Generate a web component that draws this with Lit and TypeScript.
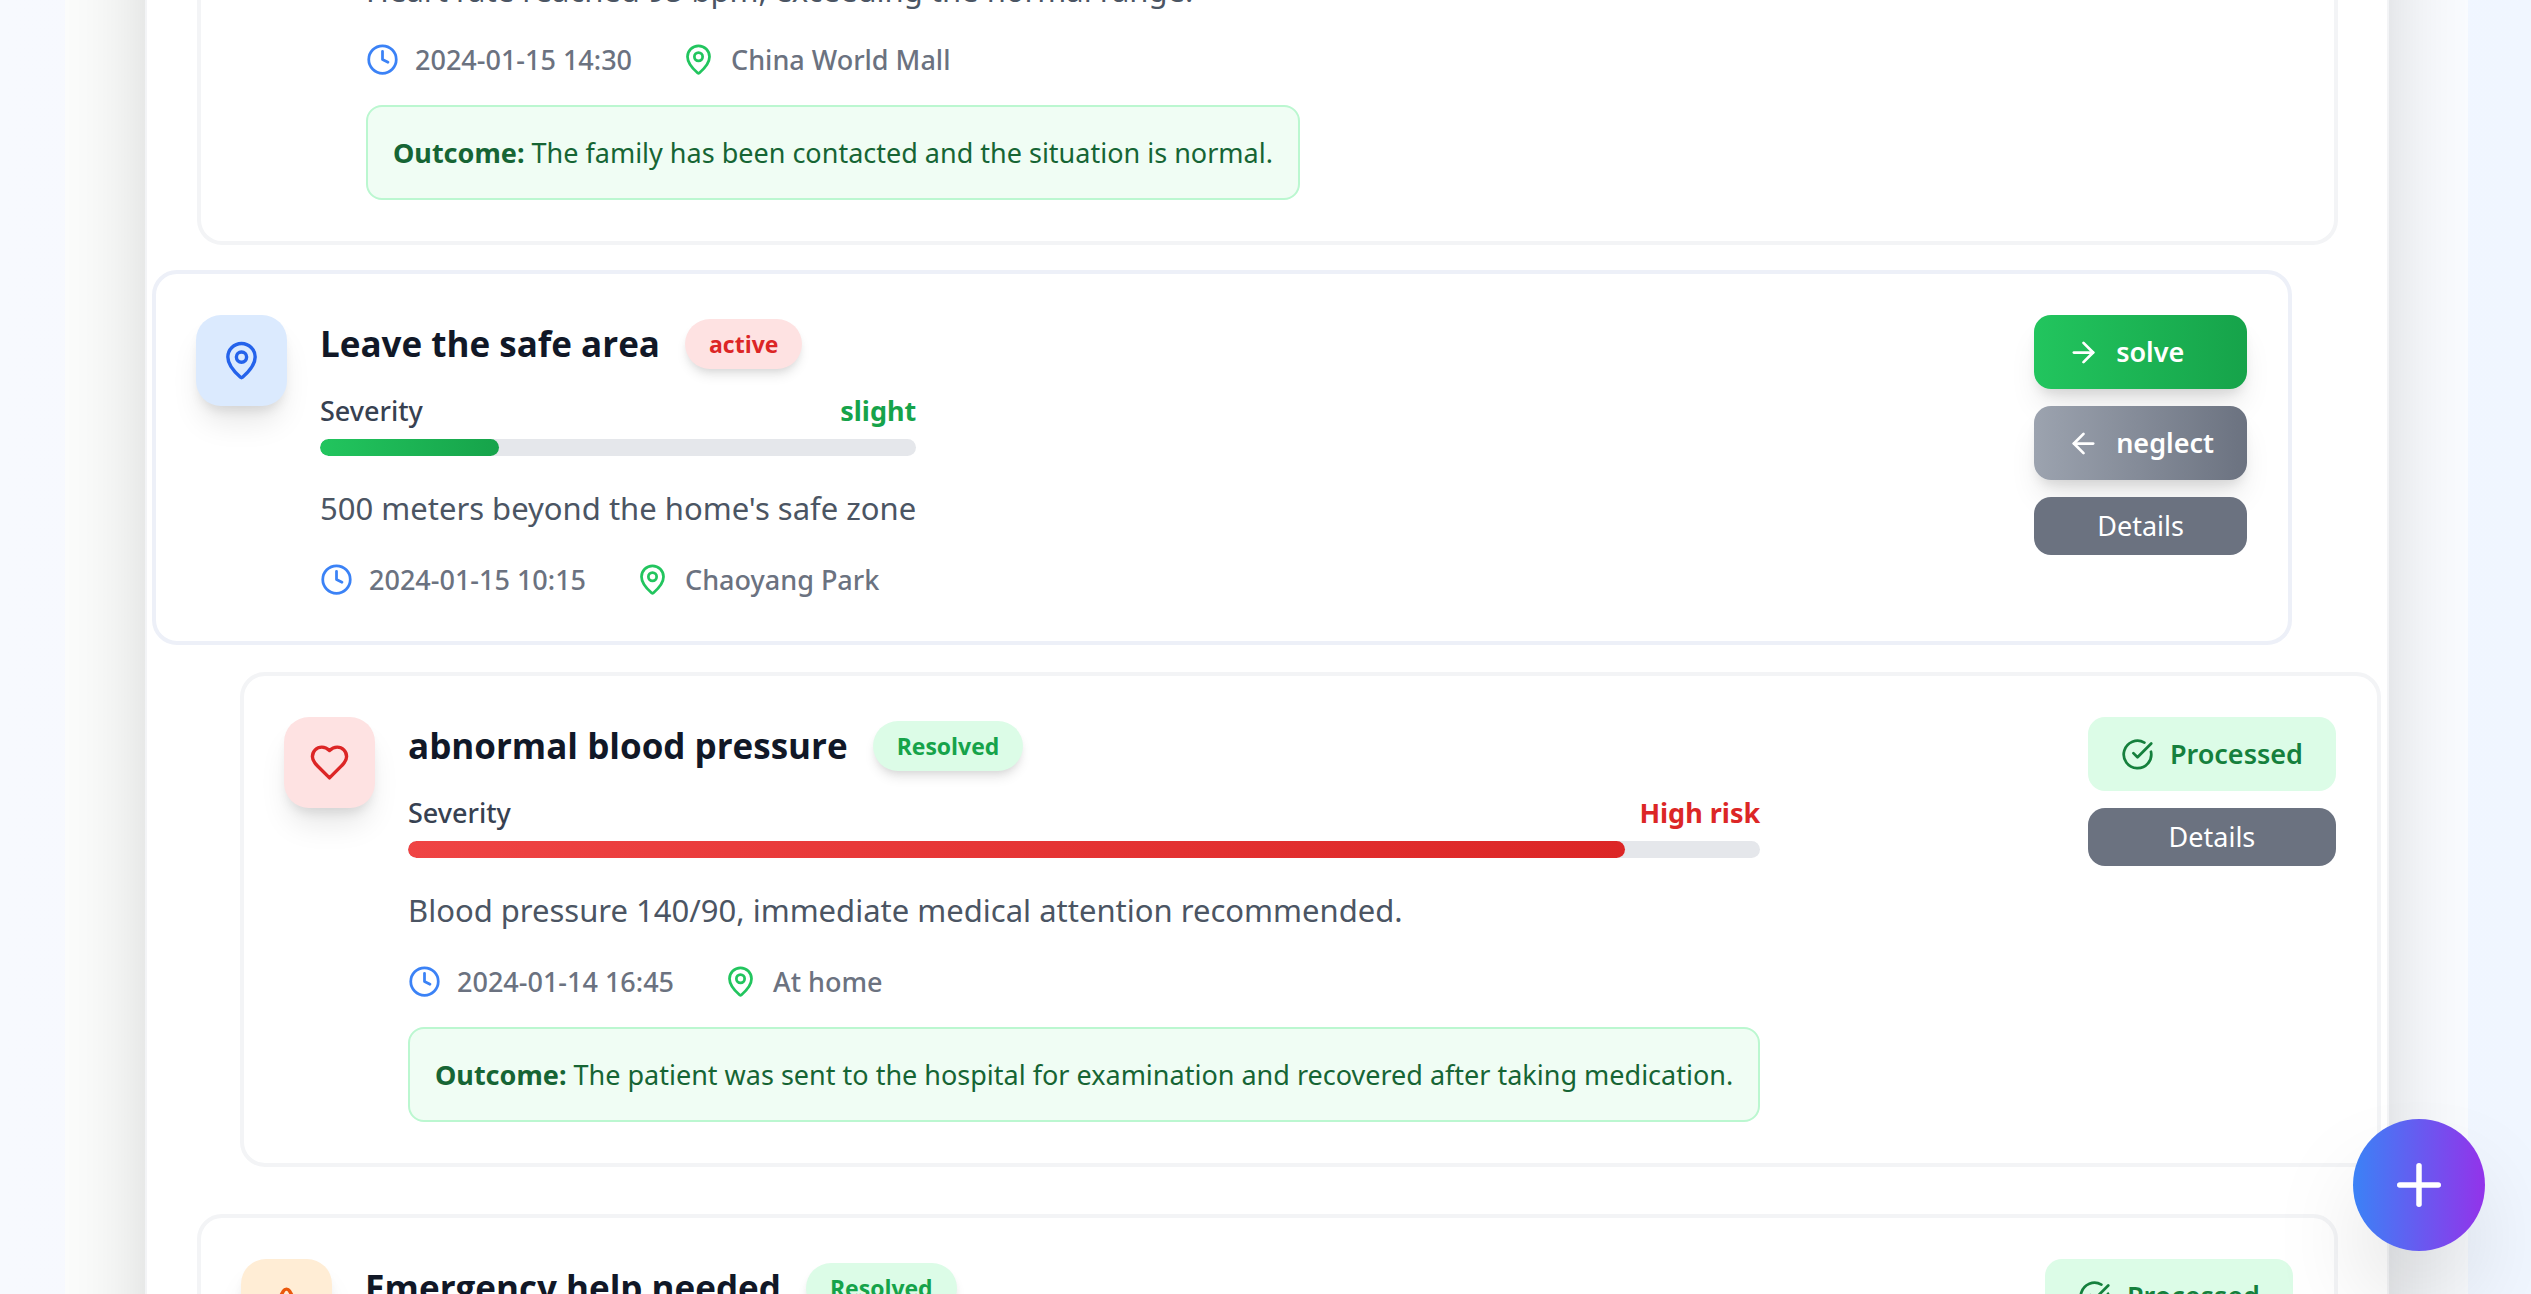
import { LitElement, html, svg, css, nothing } from "lit";
import { customElement, property } from "lit/decorators.js";

type Tone = "red" | "blue" | "orange";

interface Alert {
  icon: string;
  tone: Tone;
  title?: string;
  status?: "active" | "Resolved";
  severity?: { label: string; level: "low" | "high"; percent: number };
  text?: string;
  time?: string;
  place?: string;
  outcome?: string;
  layout: string;
}

const paths: Record<string, unknown> = {
  clock: svg`<circle cx="12" cy="12" r="10"/><path d="M12 6v6l4 2"/>`,
  pin: svg`<path d="M20 10c0 4.993-5.539 10.193-7.399 11.799a1 1 0 0 1-1.202 0C9.539 20.193 4 14.993 4 10a8 8 0 0 1 16 0"/><circle cx="12" cy="10" r="3"/>`,
  heart: svg`<path d="M19 14c1.490-1.460 3-3.210 3-5.500A5.500 5.500 0 0 0 16.500 3c-1.760 0-3 .5-4.500 2-1.500-1.500-2.740-2-4.500-2A5.500 5.500 0 0 0 2 8.500c0 2.300 1.500 4.050 3 5.500l7 7Z"/>`,
  alert: svg`<path d="m21.730 18-8-14a2 2 0 0 0-3.480 0l-8 14A2 2 0 0 0 4 21h16a2 2 0 0 0 1.730-3"/><path d="M12 9v4"/><path d="M12 17h.01"/>`,
  right: svg`<path d="M5 12h14"/><path d="m12 5 7 7-7 7"/>`,
  left: svg`<path d="M19 12H5"/><path d="m12 19-7-7 7-7"/>`,
  check: svg`<path d="M21.801 10A10 10 0 1 1 17 3.335"/><path d="m9 11 3 3L22 4"/>`,
  plus: svg`<path d="M5 12h14"/><path d="M12 5v14"/>`,
};

const icon = (name: string, cls = "") => html`<svg
  class="icon ${cls}"
  viewBox="0 0 24 24"
  aria-hidden="true"
>${paths[name]}</svg>`;

const alerts: Alert[] = [
  {
    icon: "heart",
    tone: "red",
    text: "Heart rate reached 95 bpm, exceeding the normal range.",
    time: "2024-01-15 14:30",
    place: "China World Mall",
    outcome: "The family has been contacted and the situation is normal.",
    layout: "continued",
  },
  {
    icon: "pin",
    tone: "blue",
    title: "Leave the safe area",
    status: "active",
    severity: { label: "slight", level: "low", percent: 30 },
    text: "500 meters beyond the home's safe zone",
    time: "2024-01-15 10:15",
    place: "Chaoyang Park",
    layout: "slide-left",
  },
  {
    icon: "heart",
    tone: "red",
    title: "abnormal blood pressure",
    status: "Resolved",
    severity: { label: "High risk", level: "high", percent: 90 },
    text: "Blood pressure 140/90, immediate medical attention recommended.",
    time: "2024-01-14 16:45",
    place: "At home",
    outcome:
      "The patient was sent to the hospital for examination and recovered after taking medication.",
    layout: "slide-right",
  },
  {
    icon: "alert",
    tone: "orange",
    title: "Emergency help needed",
    status: "Resolved",
    layout: "",
  },
];

@customElement("alert-card")
export class AlertCard extends LitElement {
  @property({ attribute: false }) alert!: Alert;

  static styles = css`
    :host {
      display: block;
      box-sizing: border-box;
      border: 4px solid #f3f4f6;
      border-radius: 25px;
      padding: 41px 41px 41px 40px;
      background: #fff;
    }
    :host(.continued) {
      border-top: 0;
      border-radius: 0 0 25px 25px;
      padding-top: 0;
      padding-left: 41px;
    }
    :host(.slide-left) {
      border-color: #edf0f8;
    }
    .row {
      display: flex;
      justify-content: space-between;
      align-items: flex-start;
    }
    .main {
      display: flex;
      gap: 33px;
    }
    .icon {
      display: block;
      flex: none;
      width: 33px;
      height: 33px;
      fill: none;
      stroke: currentColor;
      stroke-width: 2;
      stroke-linecap: round;
      stroke-linejoin: round;
    }
    .tile {
      box-sizing: border-box;
      flex: none;
      width: 91px;
      height: 91px;
      padding: 25px;
      border-radius: 25px;
      box-shadow: 0 21px 31px -6px rgba(0, 0, 0, 0.1), 0 8px 12px -4px rgba(0, 0, 0, 0.1);
    }
    .tile .icon {
      width: 41px;
      height: 41px;
    }
    .red { background: #fee2e2; color: #dc2626; }
    .blue { background: #dbeafe; color: #2563eb; }
    .orange { background: #ffedd5; color: #ea580c; }
    .continued .tile { visibility: hidden; }
    .head {
      display: flex;
      align-items: center;
      gap: 25px;
      margin-bottom: 17px;
    }
    h3 {
      margin: 0;
      font-family: "Open Sans", "Noto Sans", sans-serif;
      font-size: 35px;
      line-height: 58px;
      font-weight: 700;
      color: #111827;
    }
    .badge {
      padding: 8px 24px;
      border-radius: 25px;
      font-family: "Open Sans", "Noto Sans", sans-serif;
      font-size: 23px;
      line-height: 34px;
      font-weight: 700;
      box-shadow: 0 8px 12px -2px rgba(0, 0, 0, 0.1), 0 4px 8px -4px rgba(0, 0, 0, 0.1);
    }
    .badge.active { background: #fee2e2; color: #dc2626; }
    .badge.Resolved { background: #dcfce7; color: #16a34a; }
    .severity {
      display: flex;
      justify-content: space-between;
      margin-bottom: 8px;
      font-size: 27px;
      line-height: 41px;
      font-weight: 500;
      color: #374151;
    }
    .severity .low { font-weight: 700; color: #16a34a; }
    .severity .high { font-weight: 700; color: #dc2626; }
    .track {
      height: 17px;
      margin-bottom: 25px;
      border-radius: 9px;
      background: #e5e7eb;
      overflow: hidden;
    }
    .fill {
      height: 100%;
      border-radius: 9px;
    }
    .fill.low { background: linear-gradient(to right, #22c55e, #16a34a); }
    .fill.high { background: linear-gradient(to right, #ef4444, #dc2626); }
    .text {
      margin: 0 0 24px;
      font-size: 31px;
      line-height: 54px;
      color: #4b5563;
    }
    .continued .text { margin-bottom: 22px; }
    .meta {
      display: flex;
      gap: 50px;
      font-size: 27px;
      line-height: 41px;
      font-weight: 500;
      color: #6b7280;
    }
    .meta span {
      display: flex;
      align-items: center;
      gap: 16px;
    }
    .time { color: #3b82f6; }
    .place { color: #22c55e; }
    .outcome {
      margin: 25px 0 0;
      padding: 25px;
      border: 2px solid #bbf7d0;
      border-radius: 16px;
      background: #f0fdf4;
      font-size: 27px;
      line-height: 41px;
      color: #166534;
    }
    .actions {
      display: flex;
      flex-direction: column;
      gap: 17px;
    }
    button,
    .done {
      display: flex;
      align-items: center;
      gap: 16px;
      margin: 0;
      border: 0;
      border-radius: 17px;
      padding: 16px 33px;
      font-family: inherit;
      font-size: 27px;
      line-height: 42px;
      font-weight: 600;
      color: #fff;
    }
    .solve,
    .neglect {
      box-shadow: 0 21px 31px -6px rgba(0, 0, 0, 0.1), 0 8px 12px -4px rgba(0, 0, 0, 0.1);
    }
    .solve { background: linear-gradient(to right, #22c55e, #16a34a); }
    .neglect { background: linear-gradient(to right, #9ca3af, #6b7280); }
    .done { background: #dcfce7; color: #15803d; }
    .details {
      justify-content: center;
      padding: 8px 25px;
      font-weight: 400;
      background: #6b7280;
    }
  `;

  private actions() {
    const a = this.alert;
    if (!a.status) return nothing;
    return html`<div class="actions">
      ${a.status === "active"
        ? html`<button class="solve">${icon("right")}solve</button>
            <button class="neglect">${icon("left")}neglect</button>`
        : html`<div class="done">${icon("check")}Processed</div>`}
      <button class="details">Details</button>
    </div>`;
  }

  render() {
    const a = this.alert;
    return html`<article class="row ${a.layout}">
      <div class="main">
        <div class="tile ${a.tone}">${icon(a.icon)}</div>
        <div class="body">
          ${a.title
            ? html`<div class="head">
                <h3>${a.title}</h3>
                <span class="badge ${a.status}">${a.status}</span>
              </div>`
            : nothing}
          ${a.severity
            ? html`<div class="severity">
                  <span>Severity</span>
                  <span class=${a.severity.level}>${a.severity.label}</span>
                </div>
                <div class="track">
                  <div
                    class="fill ${a.severity.level}"
                    style="width:${a.severity.percent}%"
                  ></div>
                </div>`
            : nothing}
          ${a.text ? html`<p class="text">${a.text}</p>` : nothing}
          ${a.time
            ? html`<div class="meta">
                <span>${icon("clock", "time")}${a.time}</span>
                <span>${icon("pin", "place")}${a.place}</span>
              </div>`
            : nothing}
          ${a.outcome
            ? html`<p class="outcome"><strong>Outcome:</strong> ${a.outcome}</p>`
            : nothing}
        </div>
      </div>
      ${this.actions()}
    </article>`;
  }
}

@customElement("app-root")
export class AppRoot extends LitElement {
  static styles = css`
    :host {
      display: block;
      box-sizing: border-box;
      height: 100vh;
      overflow: hidden;
      padding: 0 63px 0 65px;
      background: linear-gradient(to right, #f7f9fe, #f0f6ff);
      font-family: "Noto Sans", "Open Sans", sans-serif;
    }
    .content {
      box-sizing: border-box;
      height: 100%;
      padding: 0 79px 0 80px;
      overflow: hidden;
      background: linear-gradient(to right, #fcfdfc, #fafcff);
    }
    .panel {
      box-sizing: border-box;
      min-height: 100%;
      margin-top: -200px;
      padding: 163px 49px 200px 50px;
      border: solid #f3f4f6;
      border-width: 0 2px;
      background: #fff;
      box-shadow: 0 52px 103px -25px rgba(0, 0, 0, 0.25);
    }
    .list {
      display: flex;
      flex-direction: column;
      gap: 25px;
    }
    .slide-left { margin: 0 46px 2px -45px; }
    .slide-right { margin: 0 -43px 22px 43px; }
    .fab {
      position: fixed;
      right: 46px;
      bottom: 43px;
      display: grid;
      place-items: center;
      width: 132px;
      height: 132px;
      padding: 0;
      border: 0;
      border-radius: 50%;
      background: linear-gradient(to right, #3b82f6, #9333ea);
      box-shadow: 0 52px 103px -25px rgba(0, 0, 0, 0.25);
    }
    .fab svg {
      width: 66px;
      height: 66px;
      fill: none;
      stroke: #fff;
      stroke-width: 2;
      stroke-linecap: round;
    }
  `;

  render() {
    return html`<main class="content">
        <section class="panel">
          <div class="list">
            ${alerts.map(
              (a) => html`<alert-card class=${a.layout} .alert=${a}></alert-card>`,
            )}
          </div>
        </section>
      </main>
      <button class="fab" aria-label="Add">${icon("plus")}</button>`;
  }
}
